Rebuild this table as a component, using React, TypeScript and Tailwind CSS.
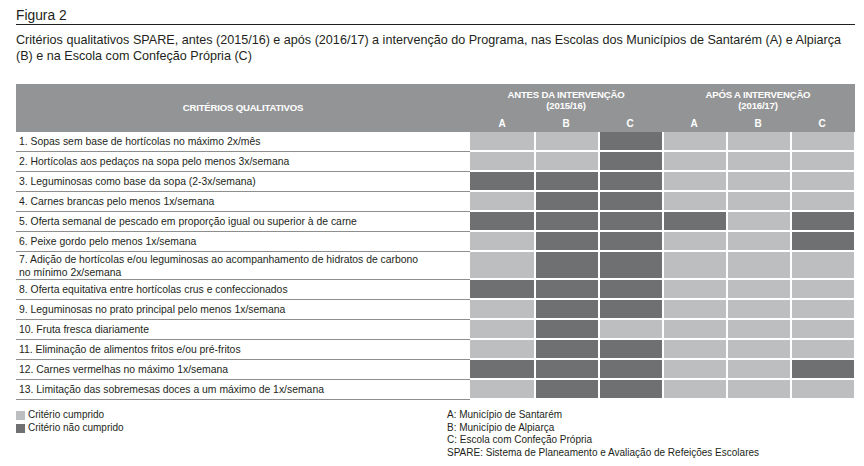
import React from "react";

const rows: { t: React.ReactNode; v: string; tall?: boolean }[] = [
  { t: "1. Sopas sem base de hortícolas no máximo 2x/mês", v: "LLDLLL" },
  { t: "2. Hortícolas aos pedaços na sopa pelo menos 3x/semana", v: "LLDLLL" },
  { t: "3. Leguminosas como base da sopa (2-3x/semana)", v: "DDDLLL" },
  { t: "4. Carnes brancas pelo menos 1x/semana", v: "LDDLLL" },
  { t: "5. Oferta semanal de pescado em proporção igual ou superior à de carne", v: "DDDDLD" },
  { t: "6. Peixe gordo pelo menos 1x/semana", v: "LDDLLD" },
  {
    t: (
      <>
        7. Adição de hortícolas e/ou leguminosas ao acompanhamento de hidratos de carbono
        <br />
        no mínimo 2x/semana
      </>
    ),
    v: "LDDLLL",
    tall: true,
  },
  { t: "8. Oferta equitativa entre hortícolas crus e confeccionados", v: "DDDLLL" },
  { t: "9. Leguminosas no prato principal pelo menos 1x/semana", v: "LDDLLL" },
  { t: "10. Fruta fresca diariamente", v: "LDLLLL" },
  { t: "11. Eliminação de alimentos fritos e/ou pré-fritos", v: "LDDLLL" },
  { t: "12. Carnes vermelhas no máximo 1x/semana", v: "DDDLLD" },
  { t: "13. Limitação das sobremesas doces a um máximo de 1x/semana", v: "LDDLLL" },
];

function Row({ t, v, tall }: { t: React.ReactNode; v: string; tall?: boolean }) {
  return (
    <div className="grid grid-cols-[454px_repeat(6,64px)]">
      <div
        className={
          tall
            ? "h-[28px] border-b border-[#8e8e8e] pl-[3px] flex items-center text-[10.4px] leading-[13px]"
            : "h-[20px] border-b border-[#8e8e8e] pl-[3px] flex items-center text-[10.4px] leading-[13px]"
        }
      >
        <span>{t}</span>
      </div>
      {v.split("").map((c, i) => (
        <div
          key={i}
          className={
            (c === "D" ? "bg-[#6f7072] " : "bg-[#bdbec0] ") +
            (i > 0 ? "border-l-2 border-b-2 border-white" : "border-b-2 border-white")
          }
        />
      ))}
    </div>
  );
}

export default function App() {
  return (
    <div className="w-[864px] h-[466px] bg-white pl-4 font-['Liberation_Sans',Arial,sans-serif] text-[#231f20] overflow-hidden">
      <div className="w-[839px]">
        <div className="pt-2 text-[13.8px] leading-[16px] border-b border-[#231f20]">Figura 2</div>
        <div className="mt-[7px] text-[12.6px] leading-[16px]">
          Critérios qualitativos SPARE, antes (2015/16) e após (2016/17) a intervenção do Programa, nas Escolas dos
          Municípios de Santarém (A) e Alpiarça
          <br />
          (B) e na Escola com Confeção Própria (C)
        </div>

        <div className="mt-5">
          <div className="grid grid-cols-[454px_repeat(6,64px)] grid-rows-[32px_16px] bg-[#939496] text-white font-bold text-[9.6px] leading-[10.5px] tracking-[-0.2px]">
            <div className="row-span-2 flex items-center justify-center">CRITÉRIOS QUALITATIVOS</div>
            <div className="col-span-3 flex flex-col items-center justify-center pt-[1px]">
              <span>ANTES DA INTERVENÇÃO</span>
              <span>(2015/16)</span>
            </div>
            <div className="col-span-3 flex flex-col items-center justify-center pt-[1px]">
              <span>APÓS A INTERVENÇÃO</span>
              <span>(2016/17)</span>
            </div>
            {["A", "B", "C", "A", "B", "C"].map((l, i) => (
              <div key={i} className="flex items-center justify-center text-[10px]">
                {l}
              </div>
            ))}
          </div>
          {rows.map((r, i) => (
            <Row key={i} t={r.t} v={r.v} tall={r.tall} />
          ))}
        </div>

        <div className="mt-[9px] flex text-[10px] leading-[12.7px]">
          <div className="w-[431px] flex flex-col">
            <div className="flex items-center gap-[3px]">
              <span className="w-[9px] h-[9px] bg-[#bdbec0]" />
              <span>Critério cumprido</span>
            </div>
            <div className="flex items-center gap-[3px]">
              <span className="w-[9px] h-[9px] bg-[#6f7072]" />
              <span>Critério não cumprido</span>
            </div>
          </div>
          <div className="flex flex-col">
            <span>A: Município de Santarém</span>
            <span>B: Município de Alpiarça</span>
            <span>C: Escola com Confeção Própria</span>
            <span>SPARE: Sistema de Planeamento e Avaliação de Refeições Escolares</span>
          </div>
        </div>
      </div>
    </div>
  );
}
